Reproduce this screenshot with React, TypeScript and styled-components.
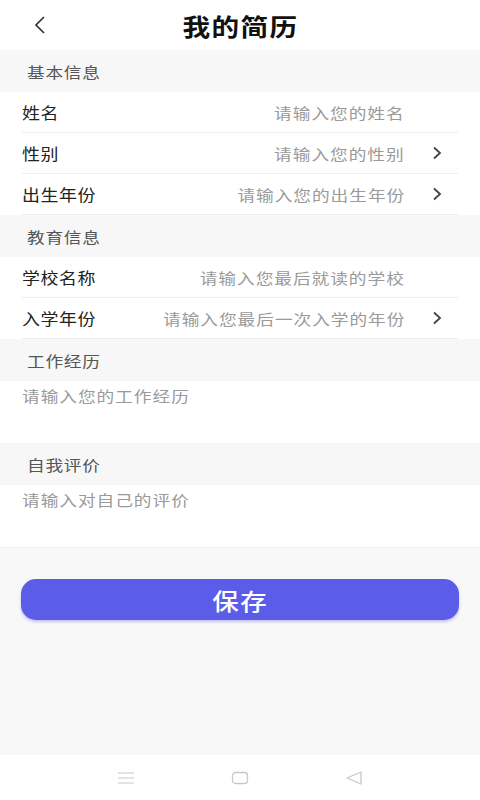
import React from "react";
import styled, { createGlobalStyle } from "styled-components";

const GlobalStyle = createGlobalStyle`
  html, body {
    margin: 0;
    padding: 0;
    background: #f8f8f8;
  }
  body {
    font-family: "Noto Sans CJK SC", "Noto Sans", sans-serif;
  }
`;

const Page = styled.div`
  width: 480px;
  height: 800px;
  display: flex;
  flex-direction: column;
  background: #f8f8f8;
  overflow: hidden;
`;

// the screen's glyphs are a little wider than tall
const Wide = styled.span<{ $scale: number; $origin?: string }>`
  display: inline-block;
  white-space: nowrap;
  transform: scaleX(${(p) => p.$scale});
  transform-origin: ${(p) => p.$origin || "left"} center;
`;

const Header = styled.div`
  height: 50px;
  flex-shrink: 0;
  background: #fff;
  display: grid;
  grid-template-columns: 80px 1fr 80px;
  align-items: center;
`;

const BackButton = styled.div`
  padding-left: 33px;
  display: flex;
  align-items: center;
`;

const Title = styled.h1`
  margin: 0;
  text-align: center;
  font-size: 24px;
  font-weight: 700;
  color: #111;
  letter-spacing: 1.2px;
`;

const SectionTitle = styled.div`
  height: 42px;
  flex-shrink: 0;
  display: flex;
  align-items: center;
  padding-left: 27px;
  font-size: 15px;
  letter-spacing: 0.6px;
  color: #555;
  background: #f7f7f7;
`;

const Group = styled.div`
  background: #fff;
  padding: 0 22px;
`;

const Row = styled.div`
  height: 40px;
  display: flex;
  align-items: center;
  border-bottom: 1px solid #eeeeee;
`;

const Label = styled.span`
  font-size: 16px;
  letter-spacing: 0.5px;
  color: #222;
  flex-shrink: 0;
`;

const Placeholder = styled.span`
  flex: 1;
  text-align: right;
  font-size: 15px;
  color: #9a9a9a;
  letter-spacing: 0.8px;
`;

const Arrow = styled.span`
  width: 53px;
  flex-shrink: 0;
  display: flex;
  justify-content: flex-end;
  padding-right: 16px;
  box-sizing: border-box;
`;

const TextArea = styled.div`
  height: 62px;
  flex-shrink: 0;
  background: #fff;
  padding: 5px 22px 0;
  box-sizing: border-box;
  font-size: 15px;
  letter-spacing: 0.8px;
  color: #9a9a9a;
  line-height: 20px;
`;

const BottomLine = styled.div`
  border-top: 1px solid #eeeeee;
`;

const ButtonWrap = styled.div`
  padding: 31px 21px 0;
  flex: 1;
`;

const SaveButton = styled.button`
  width: 100%;
  height: 41px;
  border: none;
  border-radius: 15px;
  background: #5b5de9;
  color: #fff;
  font-family: "Noto Sans CJK SC", sans-serif;
  font-size: 23px;
  font-weight: 500;
  letter-spacing: 1.3px;
  box-shadow: 0 2px 3px rgba(91, 93, 233, 0.35);
`;

const NavBar = styled.div`
  height: 45px;
  flex-shrink: 0;
  background: #fff;
  display: flex;
  justify-content: center;
  align-items: center;
  gap: 96px;
`;

const Chevron = () => (
  <svg width="10" height="14" viewBox="0 0 10 14">
    <path d="M2 1.5 L8 7 L2 12.5" fill="none" stroke="#444" strokeWidth="1.8" />
  </svg>
);

type FieldProps = { label: string; placeholder: string; arrow?: boolean };

const Field = ({ label, placeholder, arrow }: FieldProps) => (
  <Row>
    <Label>
      <Wide $scale={1.12}>{label}</Wide>
    </Label>
    <Placeholder>
      <Wide $scale={1.18} $origin="right">
        {placeholder}
      </Wide>
    </Placeholder>
    <Arrow>{arrow ? <Chevron /> : null}</Arrow>
  </Row>
);

const Section = ({ children }: { children: string }) => (
  <SectionTitle>
    <Wide $scale={1.18}>{children}</Wide>
  </SectionTitle>
);

export default function App() {
  return (
    <Page>
      <GlobalStyle />
      <Header>
        <BackButton>
          <svg width="14" height="20" viewBox="0 0 14 20">
            <path d="M11 2 L3 10 L11 18" fill="none" stroke="#333" strokeWidth="1.7" />
          </svg>
        </BackButton>
        <Title>
          <Wide $scale={1.15} $origin="center">
            我的简历
          </Wide>
        </Title>
        <div />
      </Header>

      <Section>基本信息</Section>
      <Group>
        <Field label="姓名" placeholder="请输入您的姓名" />
        <Field label="性别" placeholder="请输入您的性别" arrow />
        <Field label="出生年份" placeholder="请输入您的出生年份" arrow />
      </Group>

      <Section>教育信息</Section>
      <Group>
        <Field label="学校名称" placeholder="请输入您最后就读的学校" />
        <Field label="入学年份" placeholder="请输入您最后一次入学的年份" arrow />
      </Group>

      <Section>工作经历</Section>
      <TextArea>
        <Wide $scale={1.18}>请输入您的工作经历</Wide>
      </TextArea>

      <Section>自我评价</Section>
      <TextArea>
        <Wide $scale={1.18}>请输入对自己的评价</Wide>
      </TextArea>
      <BottomLine />

      <ButtonWrap>
        <SaveButton>
          <Wide $scale={1.15} $origin="center">
            保存
          </Wide>
        </SaveButton>
      </ButtonWrap>

      <NavBar>
        <svg width="18" height="14" viewBox="0 0 18 14">
          <path d="M1 2 H17 M1 7 H17 M1 12 H17" stroke="#c8c8c8" strokeWidth="1.2" />
        </svg>
        <svg width="18" height="14" viewBox="0 0 18 14">
          <rect x="1.5" y="1.5" width="15" height="11" rx="3" fill="none" stroke="#c8c8c8" strokeWidth="1.3" />
        </svg>
        <svg width="18" height="14" viewBox="0 0 18 14">
          <path d="M16 1 L2 7 L16 13 Z" fill="none" stroke="#c8c8c8" strokeWidth="1.3" strokeLinejoin="round" />
        </svg>
      </NavBar>
    </Page>
  );
}
